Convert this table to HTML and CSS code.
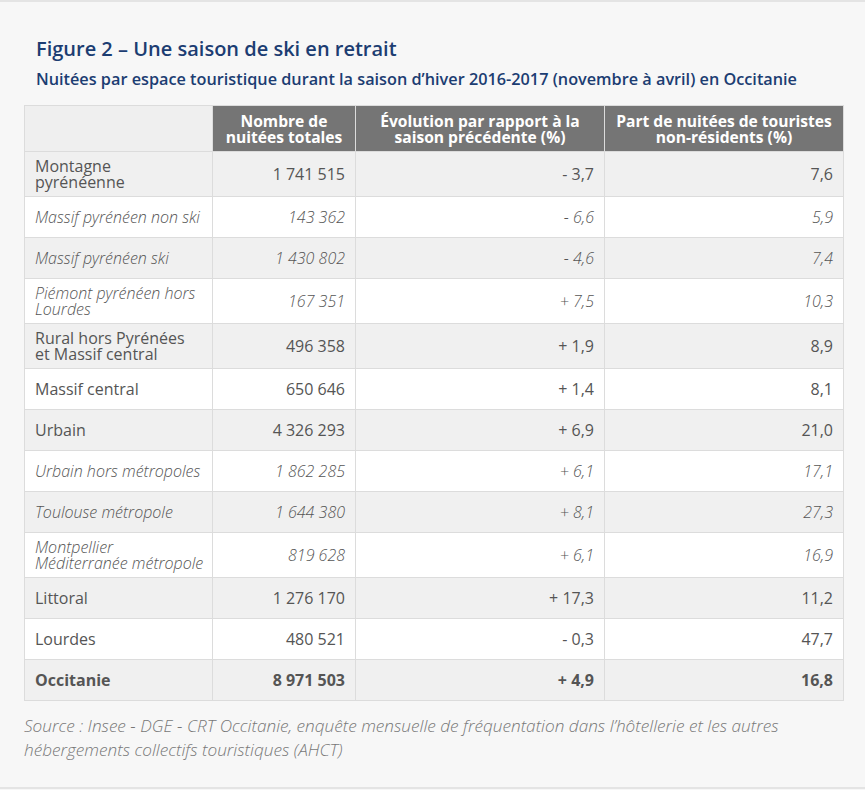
FILE: index.html
```html
<!DOCTYPE html>
<html lang="fr">
<head>
<meta charset="utf-8">
<link rel="stylesheet" href="styles.css">
</head>
<body>
<div class="page">
  <h1 class="title">Figure 2 – Une saison de ski en retrait</h1>
  <h2 class="subtitle">Nuitées par espace touristique durant la saison d’hiver 2016-2017 (novembre à avril) en Occitanie</h2>
  <table class="data">
    <colgroup>
      <col class="c1"><col class="c2"><col class="c3"><col class="c4">
    </colgroup>
    <thead>
      <tr>
        <th class="blank"></th>
        <th>Nombre de<br>nuitées totales</th>
        <th>Évolution par rapport à la<br>saison précédente (%)</th>
        <th>Part de nuitées de touristes<br>non-résidents (%)</th>
      </tr>
    </thead>
    <tbody>
      <tr class="odd"><td>Montagne<br>pyrénéenne</td><td>1 741 515</td><td>- 3,7</td><td>7,6</td></tr>
      <tr class="sub"><td>Massif pyrénéen non ski</td><td>143 362</td><td>- 6,6</td><td>5,9</td></tr>
      <tr class="odd sub"><td>Massif pyrénéen ski</td><td>1 430 802</td><td>- 4,6</td><td>7,4</td></tr>
      <tr class="sub"><td>Piémont pyrénéen hors<br>Lourdes</td><td>167 351</td><td>+ 7,5</td><td>10,3</td></tr>
      <tr class="odd"><td>Rural hors Pyrénées<br>et Massif central</td><td>496 358</td><td>+ 1,9</td><td>8,9</td></tr>
      <tr><td>Massif central</td><td>650 646</td><td>+ 1,4</td><td>8,1</td></tr>
      <tr class="odd"><td>Urbain</td><td>4 326 293</td><td>+ 6,9</td><td>21,0</td></tr>
      <tr class="sub"><td>Urbain hors métropoles</td><td>1 862 285</td><td>+ 6,1</td><td>17,1</td></tr>
      <tr class="odd sub"><td>Toulouse métropole</td><td>1 644 380</td><td>+ 8,1</td><td>27,3</td></tr>
      <tr class="sub"><td>Montpellier<br>Méditerranée métropole</td><td>819 628</td><td>+ 6,1</td><td>16,9</td></tr>
      <tr class="odd"><td>Littoral</td><td>1 276 170</td><td>+ 17,3</td><td>11,2</td></tr>
      <tr><td>Lourdes</td><td>480 521</td><td>- 0,3</td><td>47,7</td></tr>
      <tr class="odd total"><td>Occitanie</td><td>8 971 503</td><td>+ 4,9</td><td>16,8</td></tr>
    </tbody>
  </table>
  <p class="source">Source : Insee - DGE - CRT Occitanie, enquête mensuelle de fréquentation dans l’hôtellerie et les autres hébergements collectifs touristiques (AHCT)</p>
</div>
</body>
</html>
```

FILE: styles.css
```css
html, body {
  margin: 0;
  padding: 0;
  background: #f7f7f7;
}
.page {
  box-sizing: border-box;
  height: 789px;
  border-top: 2px solid #e4e4e4;
  border-bottom: 2px solid #e4e4e4;
  padding: 0 23px 0 24px;
  font-family: "Open Sans", "DejaVu Sans", sans-serif;
}
.title {
  margin: 0;
  padding: 34px 0 0 12px;
  font-size: 20px;
  line-height: 26px;
  font-weight: 600;
  color: #1c3d72;
}
.subtitle {
  margin: 0;
  padding: 6px 0 0 12px;
  font-size: 16.25px;
  line-height: 22px;
  font-weight: 600;
  color: #1c3d72;
}
.data {
  margin-top: 15px;
  width: 819px;
  border-collapse: collapse;
  table-layout: fixed;
  font-size: 16px;
  line-height: 16px;
  color: #555;
}
.c1 { width: 188px; }
.c2 { width: 143px; }
.c3 { width: 249px; }
.c4 { width: 239px; }
.data th {
  background: #757575;
  color: #fff;
  font-weight: 700;
  font-size: 15.6px;
  line-height: 16px;
  text-align: center;
  padding: 7px 6px 6px;
  border: 1px solid #dcdcdc;
}
.data th.blank {
  background: #efefef;
}
.data td {
  border: 1px solid #dcdcdc;
  padding: 6px 10px;
  height: 28px;
  text-align: right;
  white-space: nowrap;
  background: #fff;
}
.data td:first-child {
  text-align: left;
}
.data tr.odd td {
  background: #f0f0f0;
}
.data tr.sub td {
  font-style: italic;
  font-weight: 300;
}
.data tr.total td {
  font-weight: 700;
}
.source {
  margin: 13px 0 0 0;
  font-size: 17.2px;
  line-height: 24px;
  font-style: italic;
  font-weight: 300;
  color: #777;
}
```
